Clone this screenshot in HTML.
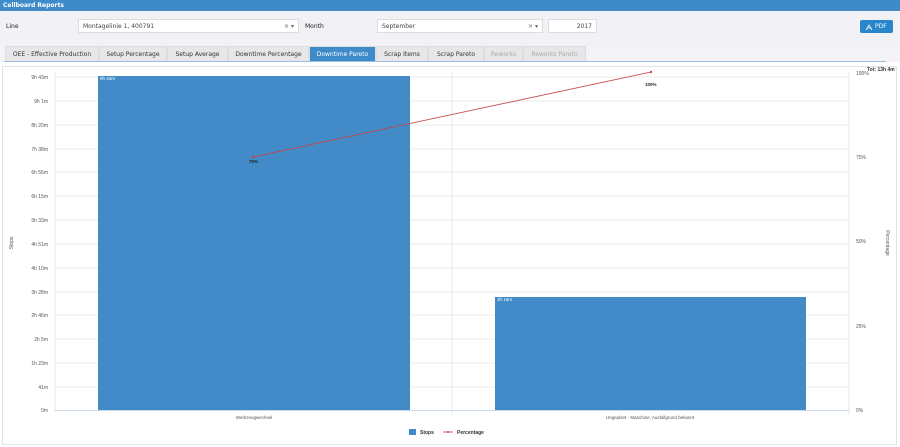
<!DOCTYPE html>
<html><head><style>
*{margin:0;padding:0;box-sizing:border-box}
body{width:900px;height:447px;overflow:hidden;background:#fff;font-family:"DejaVu Sans","Liberation Sans",sans-serif;position:relative}
.hdr{position:absolute;left:0;top:0;width:900px;height:11px;background:#3f8bc9;color:#fff;font-size:6px;font-weight:bold;padding:2px 3px}
.top{position:absolute;left:0;top:11px;width:900px;height:35px;background:#f1f1f6}
.lbl{position:absolute;font-size:6px;color:#222}
.sel{position:absolute;height:14px;background:#fff;border:1px solid #ddd;font-size:6px;color:#444;padding:3px 4px}
.sel span{position:absolute;right:4px;top:3px;color:#666}
.pdf{position:absolute;left:860px;top:20px;width:33px;height:13px;background:#2a86cb;border-radius:2px;color:#fff;font-size:6px;padding:3px 0 0 15px}
.tabs{position:absolute;left:0;top:46px;width:900px;height:16px;background:#f4f4f8}
.tab{position:absolute;top:0;height:15px;background:#e7e7e9;border:1px solid #ddd;border-bottom:none;font-size:6px;color:#333;text-align:center;padding-top:4px;white-space:nowrap}
.tab.on{background:#3f8bc9;color:#fff}
.tab.dis{color:#aaa}
.line{position:absolute;left:4px;top:61px;width:882px;height:1px;background:#9bc0df}
.panel{position:absolute;left:2px;top:66px;width:895px;height:379px;border:1px solid #e3e3e3}
</style></head><body>
<div class="hdr">Cellboard Reports</div>
<div class="top"></div>
<div class="lbl" style="left:6px;top:23px">Line</div>
<div class="sel" style="left:78px;top:19px;width:221px">Montagelinie 1, 400791<span>× ▾</span></div>
<div class="lbl" style="left:305px;top:23px">Month</div>
<div class="sel" style="left:377px;top:19px;width:166px">September<span>× ▾</span></div>
<div class="sel" style="left:548px;top:19px;width:49px;text-align:right">2017</div>
<div class="pdf">PDF</div>
<svg style="position:absolute;left:865px;top:23px" width="8" height="8"><path d="M1 7 L4 2 L7 7 M2.5 5 L5.5 5" stroke="#fff" stroke-width="0.8" fill="none"/></svg>
<div class="tabs">
<div class="tab" style="left:5px;width:94px">OEE - Effective Production</div>
<div class="tab" style="left:99px;width:68px">Setup Percentage</div>
<div class="tab" style="left:167px;width:61px">Setup Average</div>
<div class="tab" style="left:228px;width:81px">Downtime Percentage</div>
<div class="tab on" style="left:309px;width:67px">Downtime Pareto</div>
<div class="tab" style="left:376px;width:52px">Scrap Items</div>
<div class="tab" style="left:428px;width:56px">Scrap Pareto</div>
<div class="tab dis" style="left:484px;width:39px">Reworks</div>
<div class="tab dis" style="left:523px;width:63px">Reworks Pareto</div>
</div>
<div class="line"></div>
<div class="panel"></div>
<svg style="position:absolute;left:0;top:0" width="900" height="447" font-family="Liberation Sans, sans-serif">
<g stroke="#e4e4e4" stroke-width="0.8">
<line x1="55" x2="849" y1="77" y2="77"/><line x1="55" x2="849" y1="101" y2="101"/><line x1="55" x2="849" y1="125" y2="125"/><line x1="55" x2="849" y1="149" y2="149"/><line x1="55" x2="849" y1="172" y2="172"/><line x1="55" x2="849" y1="196" y2="196"/><line x1="55" x2="849" y1="220" y2="220"/><line x1="55" x2="849" y1="244" y2="244"/><line x1="55" x2="849" y1="268" y2="268"/><line x1="55" x2="849" y1="292" y2="292"/><line x1="55" x2="849" y1="315" y2="315"/><line x1="55" x2="849" y1="339" y2="339"/><line x1="55" x2="849" y1="363" y2="363"/><line x1="55" x2="849" y1="387" y2="387"/>
<line x1="55" x2="55" y1="72" y2="412"/><line x1="452" x2="452" y1="72" y2="415"/><line x1="849" x2="849" y1="72" y2="415"/>
</g>
<line x1="55" x2="849" y1="410.5" y2="410.5" stroke="#c8d8ea"/>
<g font-size="5" fill="#555" text-anchor="end">
<text x="48" y="79">9h 43m</text><text x="48" y="103">9h 1m</text><text x="48" y="127">8h 20m</text><text x="48" y="151">7h 38m</text><text x="48" y="174">6h 56m</text><text x="48" y="198">6h 15m</text><text x="48" y="222">5h 33m</text><text x="48" y="246">4h 51m</text><text x="48" y="270">4h 10m</text><text x="48" y="294">3h 28m</text><text x="48" y="317">2h 46m</text><text x="48" y="341">2h 5m</text><text x="48" y="365">1h 23m</text><text x="48" y="389">41m</text><text x="48" y="412">0m</text>
</g>
<g font-size="5" fill="#555">
<text x="856" y="75">100%</text><text x="856" y="159">75%</text><text x="856" y="243">50%</text><text x="856" y="328">25%</text><text x="856" y="412">0%</text>
<text x="867" y="71" fill="#333" font-weight="bold">Tot: 13h 4m</text>
</g>
<text transform="translate(13,243) rotate(-90)" font-size="5" fill="#555" text-anchor="middle">Stops</text>
<text transform="translate(886,243) rotate(90)" font-size="5" fill="#555" text-anchor="middle">Percentage</text>
<rect x="98" y="76" width="312" height="334" fill="#428bc8"/>
<rect x="495" y="297" width="311" height="113" fill="#428bc8"/>
<text x="100" y="80" font-size="4.5" fill="#fff">9h 43m</text>
<text x="497" y="301" font-size="4.5" fill="#fff">3h 18m</text>
<line x1="253" y1="157" x2="651" y2="72" stroke="#c84545" stroke-width="0.8"/>
<circle cx="253" cy="157" r="1.2" fill="#c84545"/><circle cx="651" cy="72" r="1.2" fill="#c84545"/>
<text x="249" y="163" font-size="4.5" font-weight="bold" fill="#222">75%</text>
<text x="645" y="86" font-size="4.5" font-weight="bold" fill="#222">100%</text>
<text x="254" y="419" font-size="4.5" fill="#555" text-anchor="middle">Werkzeugwechsel</text>
<text x="650" y="419" font-size="4.5" fill="#555" text-anchor="middle">Ungeplant - Maschine, Ausfallgrund bekannt</text>
<rect x="409" y="429" width="7" height="6" fill="#428bc8"/>
<text x="420" y="434" font-size="5" font-weight="bold" fill="#333">Stops</text>
<line x1="443" y1="432" x2="453" y2="432" stroke="#c84545" stroke-width="0.8"/><circle cx="448" cy="432" r="1" fill="#c84545"/>
<text x="457" y="434" font-size="5" font-weight="bold" fill="#333">Percentage</text>
</svg>
</body></html>
